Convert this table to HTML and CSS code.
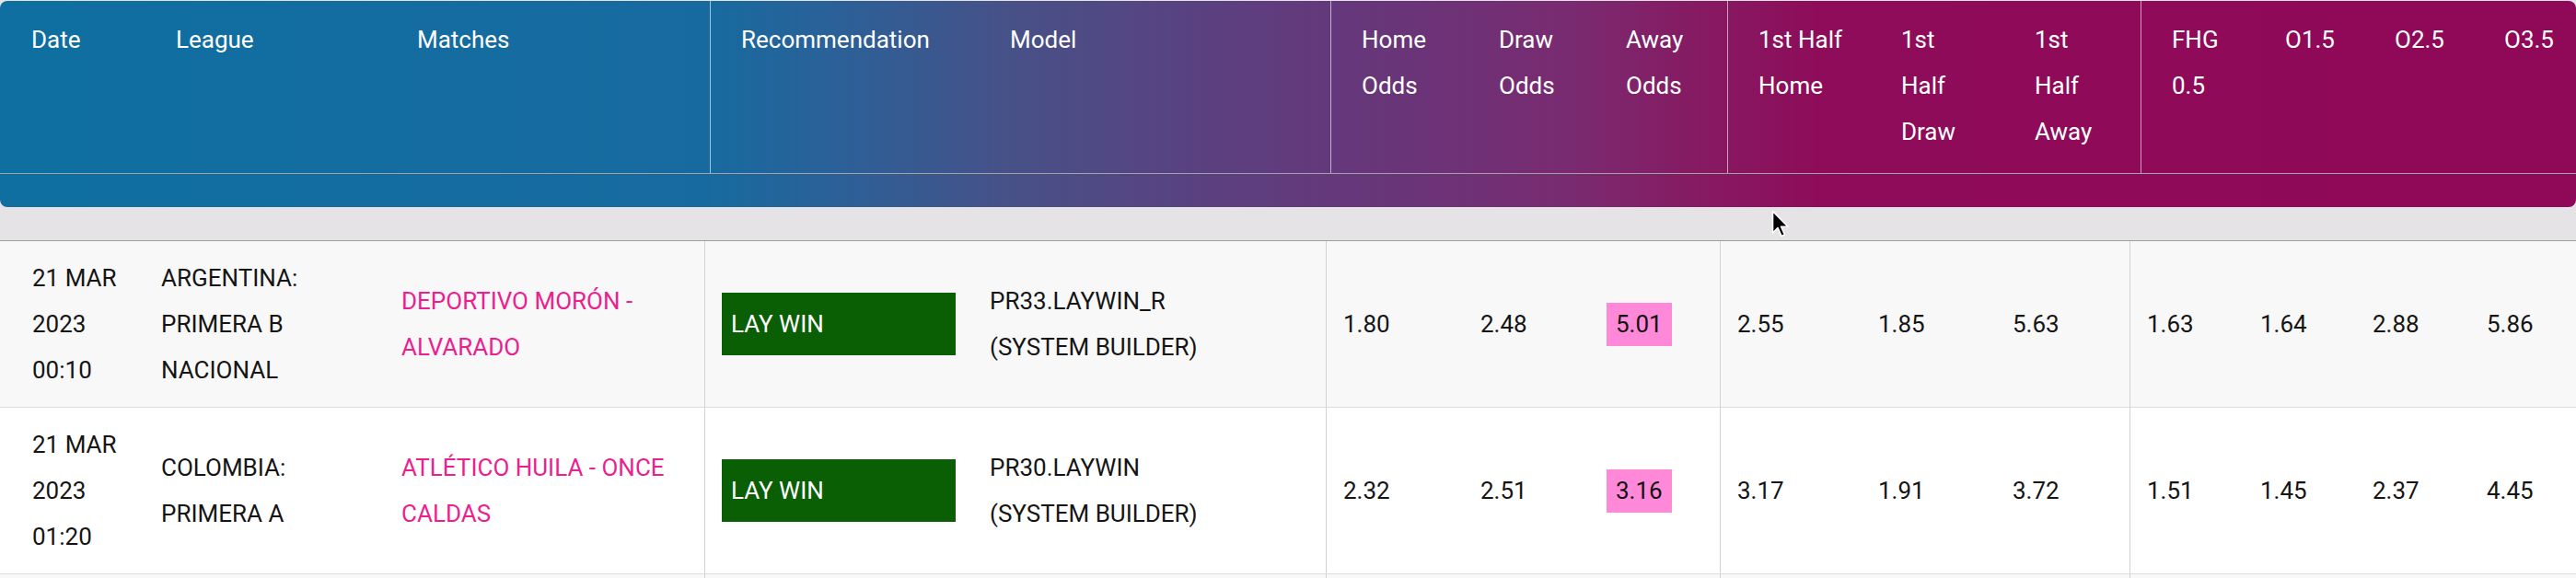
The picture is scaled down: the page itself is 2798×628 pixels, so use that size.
FILE: index.html
```html
<!DOCTYPE html>
<html lang="en">
<head>
<meta charset="utf-8">
<title>Recommendations</title>
<link rel="stylesheet" href="styles.css">
</head>
<body>
<div class="page">
  <div class="thead">
    <div class="head-row">
      <div class="hc c-date">Date</div>
      <div class="hc">League</div>
      <div class="hc">Matches</div>
      <div class="hc sep">Recommendation</div>
      <div class="hc">Model</div>
      <div class="hc sep">Home<br>Odds</div>
      <div class="hc">Draw<br>Odds</div>
      <div class="hc">Away<br>Odds</div>
      <div class="hc sep">1st Half<br>Home</div>
      <div class="hc">1st<br>Half<br>Draw</div>
      <div class="hc">1st<br>Half<br>Away</div>
      <div class="hc sep">FHG<br>0.5</div>
      <div class="hc">O1.5</div>
      <div class="hc">O2.5</div>
      <div class="hc">O3.5</div>
    </div>
    <div class="head-filter"></div>
  </div>

  <div class="tbody">
    <div class="row odd">
      <div class="bc c-date">21 MAR<br>2023<br>00:10</div>
      <div class="bc">ARGENTINA:<br>PRIMERA B<br>NACIONAL</div>
      <div class="bc match">DEPORTIVO MORÓN -<br>ALVARADO</div>
      <div class="bc sep"><span class="rec">LAY WIN</span></div>
      <div class="bc">PR33.LAYWIN_R<br>(SYSTEM BUILDER)</div>
      <div class="bc sep">1.80</div>
      <div class="bc">2.48</div>
      <div class="bc"><span class="hl">5.01</span></div>
      <div class="bc sep">2.55</div>
      <div class="bc">1.85</div>
      <div class="bc">5.63</div>
      <div class="bc sep">1.63</div>
      <div class="bc">1.64</div>
      <div class="bc">2.88</div>
      <div class="bc">5.86</div>
    </div>
    <div class="row even">
      <div class="bc c-date">21 MAR<br>2023<br>01:20</div>
      <div class="bc">COLOMBIA:<br>PRIMERA A</div>
      <div class="bc match">ATLÉTICO HUILA - ONCE<br>CALDAS</div>
      <div class="bc sep"><span class="rec">LAY WIN</span></div>
      <div class="bc">PR30.LAYWIN<br>(SYSTEM BUILDER)</div>
      <div class="bc sep">2.32</div>
      <div class="bc">2.51</div>
      <div class="bc"><span class="hl">3.16</span></div>
      <div class="bc sep">3.17</div>
      <div class="bc">1.91</div>
      <div class="bc">3.72</div>
      <div class="bc sep">1.51</div>
      <div class="bc">1.45</div>
      <div class="bc">2.37</div>
      <div class="bc">4.45</div>
    </div>
    <div class="row odd">
      <div class="bc c-date"></div>
      <div class="bc"></div>
      <div class="bc"></div>
      <div class="bc sep"></div>
      <div class="bc"></div>
      <div class="bc sep"></div>
      <div class="bc"></div>
      <div class="bc"></div>
      <div class="bc sep"></div>
      <div class="bc"></div>
      <div class="bc"></div>
      <div class="bc sep"></div>
      <div class="bc"></div>
      <div class="bc"></div>
      <div class="bc"></div>
    </div>
  </div>

  <svg class="cursor" width="24" height="34" viewBox="0 0 24 34" aria-hidden="true">
    <path d="M1.5 1.5 L1.5 25 L7 19.5 L11 28.5 L14.5 27 L10.6 18.2 L18 18.2 Z" fill="#000" stroke="#fff" stroke-width="1.6" stroke-linejoin="round"/>
  </svg>
</div>
</body>
</html>
```

FILE: styles.css
```css
html, body {
  margin: 0;
  padding: 0;
  overflow: hidden;
  background: #e5e3e5;
}

.page {
  position: relative;
  width: 2798px;
  padding-top: 1px;
  font-family: Roboto, "Liberation Sans", Arial, sans-serif;
  font-size: 26px;
}

.thead {
  height: 224px;
  border-radius: 8px;
  background: linear-gradient(to right,
    #0f6fa1 0%,
    #176a9f 27.5%,
    #2a6198 32.3%,
    #485087 39.6%,
    #5b4080 46.9%,
    #6a3478 54.8%,
    #7a2a70 61.2%,
    #861a62 66%,
    #8e0c5a 70.8%,
    #900858 100%);
  color: #fff;
  overflow: hidden;
}

.head-row {
  display: grid;
  grid-template-columns: 157px 262px 352px 292px 382px 149px 138px 144px 155px 145px 149px 123px 119px 119px 112px;
  box-sizing: border-box;
  height: 188px;
  border-bottom: 1px solid #a3a3a3;
}

.hc {
  padding: 17px 0 0 34px;
  line-height: 50px;
  font-weight: 400;
  white-space: nowrap;
}

.hc.sep {
  border-left: 1px solid rgba(255, 255, 255, 0.6);
  padding-left: 33px;
}

.head-filter {
  height: 36px;
}

.tbody {
  margin-top: 36px;
  border-top: 1px solid #9e9e9e;
}

.row {
  display: grid;
  grid-template-columns: 156px 261px 348px 291px 384px 149px 137px 142px 153px 146px 146px 123px 122px 124px 116px;
  min-height: 180px;
  border-bottom: 1px solid #dcdcdc;
}

.row.odd { background: #f8f8f8; }
.row.even { background: #ffffff; }

.bc {
  display: flex;
  flex-direction: column;
  justify-content: center;
  align-items: flex-start;
  padding: 15px 0 15px 19px;
  line-height: 50px;
  color: #151515;
  white-space: nowrap;
}

.bc.c-date { padding-left: 35px; }

.bc.sep {
  border-left: 1px solid #d2d2d2;
  padding-left: 18px;
}

.match { color: #ec1f8f; }

.rec {
  display: flex;
  align-items: center;
  box-sizing: border-box;
  width: 254px;
  height: 68px;
  padding-left: 10px;
  background: #0a5e04;
  color: #fff;
  line-height: 68px;
}

.hl {
  display: inline-block;
  padding: 8px 10px;
  line-height: 31px;
  background: #ff88d8;
  color: #111;
}

.cursor {
  position: absolute;
  left: 1924px;
  top: 228px;
}
```
